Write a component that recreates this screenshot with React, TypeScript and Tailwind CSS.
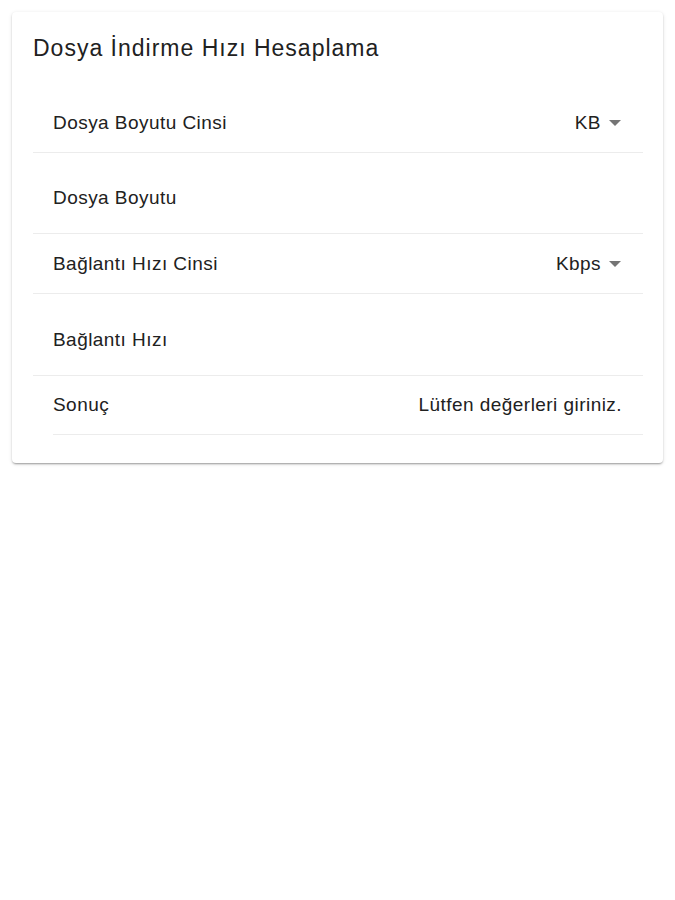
const rowText = "text-[19px] leading-6 tracking-[0.45px] text-[#212121]";

function Caret() {
  return (
    <svg width="12" height="6" viewBox="0 0 12 6" className="ml-2 fill-[#757575]">
      <path d="M0 0h12L6 6z" />
    </svg>
  );
}

export default function App() {
  return (
    <div className="min-h-[900px] bg-white p-3 font-[family-name:'Liberation_Sans',Arial,sans-serif]">
      <div className="w-[651px] h-[451px] rounded bg-white shadow-[0_2px_2px_-1px_rgba(0,0,0,0.25),0_1px_2px_0_rgba(0,0,0,0.12),0_1px_4px_0_rgba(0,0,0,0.1)]">
        <div className="h-[81px] pl-[21px] pt-[22px] text-[23px] leading-7 tracking-[1px] text-[#212121]">
          Dosya İndirme Hızı Hesaplama
        </div>
        <div className="ml-[21px] mr-[20px]">
          <div className="flex h-[60px] items-center justify-between border-b border-[#ececec] pl-[20px] pr-[22px]">
            <span className={rowText}>Dosya Boyutu Cinsi</span>
            <span className={`flex items-center ${rowText}`}>
              KB
              <Caret />
            </span>
          </div>
          <div className="h-[81px] border-b border-[#ececec] pl-[20px] pt-[33px]">
            <div className={rowText}>Dosya Boyutu</div>
          </div>
          <div className="flex h-[60px] items-center justify-between border-b border-[#ececec] pl-[20px] pr-[22px]">
            <span className={rowText}>Bağlantı Hızı Cinsi</span>
            <span className={`flex items-center ${rowText}`}>
              Kbps
              <Caret />
            </span>
          </div>
          <div className="h-[82px] border-b border-[#ececec] pl-[20px] pt-[34px]">
            <div className={rowText}>Bağlantı Hızı</div>
          </div>
          <div className="ml-[20px] flex h-[59px] items-center justify-between border-b border-[#ececec] pr-[21px]">
            <span className={rowText}>Sonuç</span>
            <span className={rowText}>Lütfen değerleri giriniz.</span>
          </div>
        </div>
      </div>
    </div>
  );
}
